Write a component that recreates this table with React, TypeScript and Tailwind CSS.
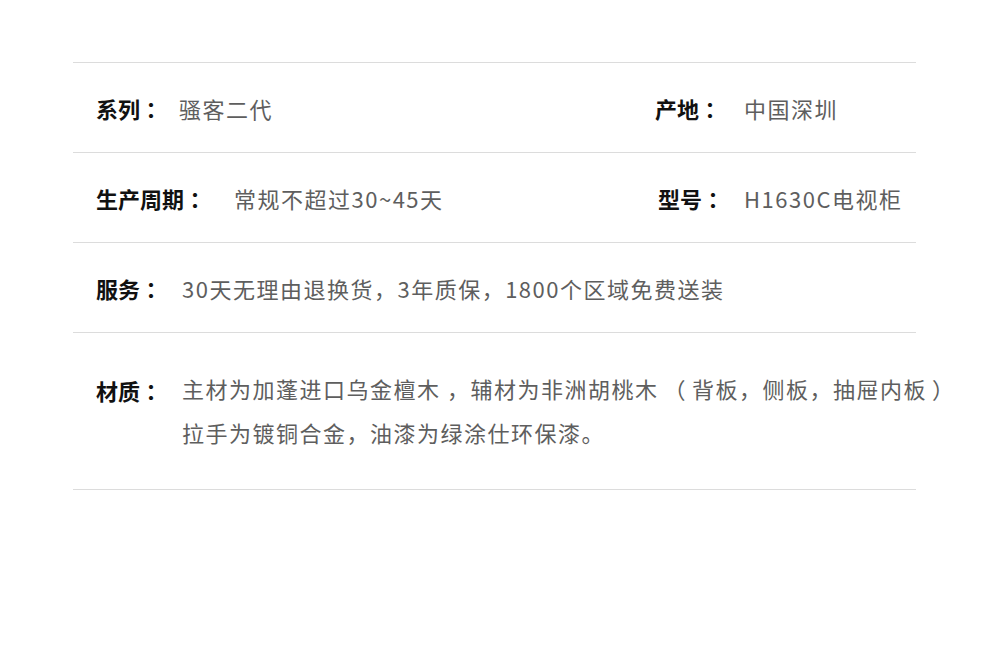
import React from 'react';

const cjk = "font-['Noto_Sans_CJK_SC','Noto_Sans',sans-serif]";
const centred = "font-['Noto_Sans_CJK_JP','Noto_Sans_CJK_SC',sans-serif]";

function Label({ text, gap }: { text: string; gap: string }) {
  return (
    <span className={`text-[22px] font-bold text-[#111] whitespace-nowrap leading-[44px] ${cjk} ${gap}`}>
      {text}
      <span className={centred}>：</span>
    </span>
  );
}

function Field({ label, value, gap, className = '' }: { label: string; value: React.ReactNode; gap: string; className?: string }) {
  return (
    <div className={`flex items-center ${className}`}>
      <Label text={label} gap={gap} />
      <span className={`text-[22px] tracking-[1.5px] text-[#5e5e5e] whitespace-nowrap leading-[44px] ${cjk}`}>{value}</span>
    </div>
  );
}

export default function App() {
  return (
    <div className="w-[990px] h-[650px] bg-white pt-[62px]">
      <div className="ml-[73px] w-[843px] border-t border-[#dcdcdc]">
        <div className="h-[90px] flex items-center border-b border-[#dcdcdc]">
          <div className="w-[582px] pl-[23px]">
            <Field label="系列" value="骚客二代" gap="mr-[17px]" />
          </div>
          <Field label="产地" value="中国深圳" gap="mr-[23px]" />
        </div>
        <div className="h-[90px] flex items-center border-b border-[#dcdcdc]">
          <div className="w-[582px] pl-[23px]">
            <Field label="生产周期" value="常规不超过30~45天" gap="mr-[28px]" />
          </div>
          <Field label="型号" value="H1630C电视柜" gap="mr-[20px]" className="pl-[3px]" />
        </div>
        <div className="h-[90px] flex items-center border-b border-[#dcdcdc] pl-[23px]">
          <Field label="服务" value="30天无理由退换货，3年质保，1800个区域免费送装" gap="mr-[20px]" />
        </div>
        <div className="h-[157px] flex items-center border-b border-[#dcdcdc] pl-[23px]">
          <div className="flex items-start">
            <Label text="材质" gap="mr-[20px]" />
            <div className={`text-[22px] tracking-[1.5px] text-[#5e5e5e] whitespace-nowrap leading-[44px] -mt-[2px] ${cjk}`}>
              <div>
                主材为加蓬进口乌金檀木 ，辅材为非洲胡桃木<span className={`mx-[5px] ${centred}`}>（</span>背板，侧板，抽屉内板<span className={`mx-[5px] ${centred}`}>）</span>
              </div>
              <div>拉手为镀铜合金，油漆为绿涂仕环保漆。</div>
            </div>
          </div>
        </div>
      </div>
    </div>
  );
}
